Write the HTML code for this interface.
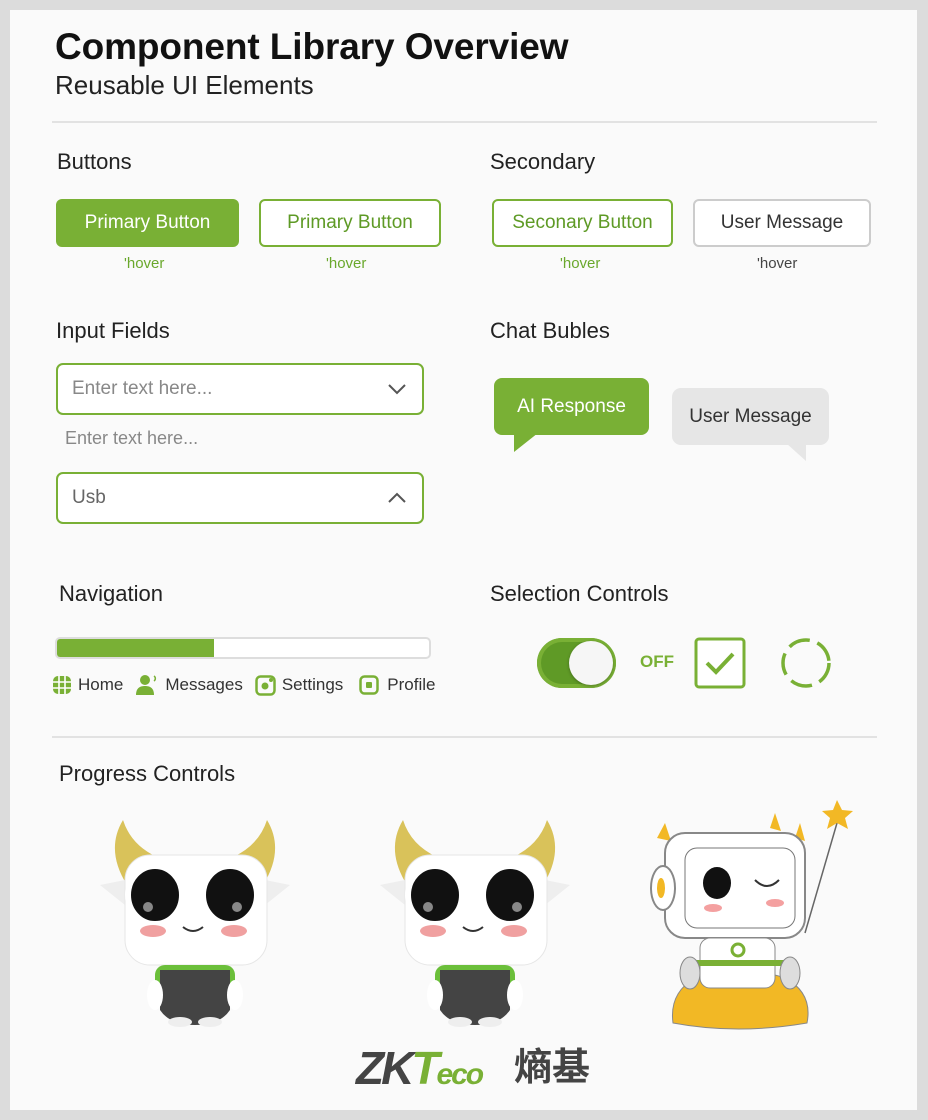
<!DOCTYPE html>
<html><head><meta charset="utf-8"><style>
*{margin:0;padding:0;box-sizing:border-box}
body{width:928px;height:1120px;background:#dcdcdc;font-family:"Liberation Sans","Noto Sans CJK SC",sans-serif;position:relative;overflow:hidden}
.card{position:absolute;left:10px;top:10px;width:907px;height:1100px;background:#fafafa}
.a{position:absolute}
h1{position:absolute;left:55px;top:26px;font-size:37px;font-weight:bold;color:#111;letter-spacing:-0.1px}
.sub{left:55px;top:70px;font-size:26px;color:#222}
.hr{height:2px;background:#e2e2e2;left:52px;width:825px}
.h{font-size:22px;color:#222}
.btn{position:absolute;height:48px;border-radius:6px;font-size:19px;display:flex;align-items:center;justify-content:center}
.g{background:#79b035;color:#fff}
.o{border:2px solid #79b035;color:#5e9a25;background:#fff}
.hv{font-size:15px;color:#6aa82c}
.inp{position:absolute;left:56px;width:368px;height:52px;border:2px solid #79b035;border-radius:7px;background:#fff;font-size:19px;color:#888;padding-left:14px;display:flex;align-items:center}
.nav{font-size:17px;color:#333}
</style></head><body>
<div class="card"></div>
<h1>Component Library Overview</h1>
<div class="a sub">Reusable UI Elements</div>
<div class="a hr" style="top:121px"></div>

<div class="a h" style="left:57px;top:149px">Buttons</div>
<div class="a h" style="left:490px;top:149px">Secondary</div>
<div class="btn g" style="left:56px;top:199px;width:183px">Primary Button</div>
<div class="btn o" style="left:259px;top:199px;width:182px">Primary Button</div>
<div class="btn o" style="left:492px;top:199px;width:181px">Seconary Button</div>
<div class="btn" style="left:693px;top:199px;width:178px;border:2px solid #ccc;background:#fff;color:#333">User Message</div>
<div class="a hv" style="left:124px;top:255px">'hover</div>
<div class="a hv" style="left:326px;top:255px">'hover</div>
<div class="a hv" style="left:560px;top:255px">'hover</div>
<div class="a hv" style="left:757px;top:255px;color:#444">'hover</div>

<div class="a h" style="left:56px;top:318px">Input Fields</div>
<div class="a h" style="left:490px;top:318px">Chat Bubles</div>
<div class="inp" style="top:363px">Enter text here...<svg class="a" style="right:16px;top:18px" width="18" height="12"><path d="M1 2l8 8 8-8" stroke="#555" stroke-width="2" fill="none"/></svg></div>
<div class="a" style="left:65px;top:428px;font-size:18px;color:#888">Enter text here...</div>
<div class="inp" style="top:472px;color:#666">Usb<svg class="a" style="right:16px;top:18px" width="18" height="12"><path d="M1 10l8-8 8 8" stroke="#555" stroke-width="2" fill="none"/></svg></div>

<div class="a" style="left:494px;top:378px;width:155px;height:57px;background:#79b035;border-radius:8px;color:#fff;font-size:19px;display:flex;align-items:center;justify-content:center">AI Response</div>
<svg class="a" style="left:512px;top:433px" width="30" height="20"><path d="M2 0v19L26 0z" fill="#79b035"/></svg>
<div class="a" style="left:672px;top:388px;width:157px;height:57px;background:#e6e6e6;border-radius:9px;color:#333;font-size:19px;display:flex;align-items:center;justify-content:center">User Message</div>
<svg class="a" style="left:786px;top:443px" width="22" height="20"><path d="M0 0h20v18z" fill="#e6e6e6"/></svg>

<div class="a h" style="left:59px;top:581px">Navigation</div>
<div class="a h" style="left:490px;top:581px">Selection Controls</div>
<div class="a" style="left:55px;top:637px;width:376px;height:22px;border:2px solid #ddd;border-radius:5px;background:#fff;overflow:hidden"><div style="width:157px;height:100%;background:#79b035"></div></div>
<div class="a nav" style="left:52px;top:674px;display:flex;align-items:center">
<svg width="20" height="20"><rect x="1" y="1" width="18" height="18" rx="5" fill="#79b035"/><path d="M7 1v18M13 1v18M1 7h18M1 13h18" stroke="#fff" stroke-width="1.6"/></svg><span style="margin-left:6px">Home</span>
<svg style="margin-left:12px" width="24" height="22"><circle cx="10" cy="6" r="5" fill="#79b035"/><path d="M1 21c0-7 4-9 9-9s9 2 9 9z" fill="#79b035"/><path d="M19 2a3 3 0 010 5" stroke="#79b035" fill="none" stroke-width="1.5"/></svg><span style="margin-left:6px">Messages</span>
<svg style="margin-left:12px" width="21" height="21"><rect x="1.5" y="1.5" width="18" height="18" rx="4" fill="none" stroke="#79b035" stroke-width="2.5"/><circle cx="10" cy="11" r="3.5" fill="#79b035"/><circle cx="16" cy="5" r="2" fill="#79b035"/></svg><span style="margin-left:6px">Settings</span>
<svg style="margin-left:16px" width="20" height="20"><rect x="1.5" y="1.5" width="17" height="17" rx="4" fill="none" stroke="#79b035" stroke-width="2.5"/><rect x="7" y="7" width="6" height="6" rx="1" fill="#79b035"/></svg><span style="margin-left:8px">Profile</span>
</div>

<div class="a" style="left:537px;top:638px;width:79px;height:50px;border-radius:25px;background:#5f9a26;box-shadow:inset 0 0 0 4px #79b035"></div>
<div class="a" style="left:569px;top:641px;width:44px;height:44px;border-radius:50%;background:#f6f6f6;box-shadow:0 1px 3px rgba(0,0,0,.3)"></div>
<div class="a" style="left:640px;top:652px;font-size:17px;color:#79b035;font-weight:bold">OFF</div>
<svg class="a" style="left:694px;top:637px" width="52" height="52"><rect x="2" y="2" width="48" height="48" rx="3" fill="#fff" stroke="#79b035" stroke-width="3"/><path d="M13 26l9 9 17-18" stroke="#79b035" stroke-width="4" fill="none"/></svg>
<svg class="a" style="left:779px;top:636px" width="54" height="54"><circle cx="27" cy="27" r="23" fill="none" stroke="#79b035" stroke-width="3.5" stroke-dasharray="22 8"/></svg>

<div class="a hr" style="top:736px"></div>
<div class="a h" style="left:59px;top:761px">Progress Controls</div>

<svg class="a" style="left:95px;top:815px" width="200" height="215" viewBox="0 0 200 215">
<path d="M32 70Q10 35 28 5Q36 30 62 42Z" fill="#d9c25a"/><path d="M168 70Q190 35 172 5Q164 30 138 42Z" fill="#d9c25a"/>
<path d="M5 70l25 20v-25z" fill="#eee"/><path d="M195 70l-25 20v-25z" fill="#eee"/>
<rect x="30" y="40" width="142" height="110" rx="25" fill="#fff" stroke="#e6e6e6"/>
<ellipse cx="60" cy="80" rx="27" ry="29" fill="#111" stroke="#fff" stroke-width="6"/><ellipse cx="135" cy="80" rx="27" ry="29" fill="#111" stroke="#fff" stroke-width="6"/>
<circle cx="53" cy="92" r="5" fill="#888"/><circle cx="142" cy="92" r="5" fill="#888"/>
<ellipse cx="58" cy="116" rx="13" ry="6" fill="#f0a0a0"/><ellipse cx="139" cy="116" rx="13" ry="6" fill="#f0a0a0"/>
<path d="M88 112q10 8 20 0" stroke="#333" fill="none" stroke-width="2"/>
<rect x="60" y="150" width="80" height="35" rx="10" fill="#6bbf3a"/>
<path d="M65 155h70v40q-10 15-35 15t-35-15z" fill="#444"/>
<ellipse cx="60" cy="180" rx="8" ry="15" fill="#fff"/><ellipse cx="140" cy="180" rx="8" ry="15" fill="#fff"/>
<ellipse cx="85" cy="207" rx="12" ry="5" fill="#eee"/><ellipse cx="115" cy="207" rx="12" ry="5" fill="#eee"/>
</svg>
<svg class="a" style="left:375px;top:815px" width="200" height="215" viewBox="0 0 200 215">
<path d="M32 70Q10 35 28 5Q36 30 62 42Z" fill="#d9c25a"/><path d="M168 70Q190 35 172 5Q164 30 138 42Z" fill="#d9c25a"/>
<path d="M5 70l25 20v-25z" fill="#eee"/><path d="M195 70l-25 20v-25z" fill="#eee"/>
<rect x="30" y="40" width="142" height="110" rx="25" fill="#fff" stroke="#e6e6e6"/>
<ellipse cx="60" cy="80" rx="27" ry="29" fill="#111" stroke="#fff" stroke-width="6"/><ellipse cx="135" cy="80" rx="27" ry="29" fill="#111" stroke="#fff" stroke-width="6"/>
<circle cx="53" cy="92" r="5" fill="#888"/><circle cx="142" cy="92" r="5" fill="#888"/>
<ellipse cx="58" cy="116" rx="13" ry="6" fill="#f0a0a0"/><ellipse cx="139" cy="116" rx="13" ry="6" fill="#f0a0a0"/>
<path d="M88 112q10 8 20 0" stroke="#333" fill="none" stroke-width="2"/>
<rect x="60" y="150" width="80" height="35" rx="10" fill="#6bbf3a"/>
<path d="M65 155h70v40q-10 15-35 15t-35-15z" fill="#444"/>
<ellipse cx="60" cy="180" rx="8" ry="15" fill="#fff"/><ellipse cx="140" cy="180" rx="8" ry="15" fill="#fff"/>
<ellipse cx="85" cy="207" rx="12" ry="5" fill="#eee"/><ellipse cx="115" cy="207" rx="12" ry="5" fill="#eee"/>
</svg>
<svg class="a" style="left:645px;top:798px" width="210" height="240" viewBox="0 0 210 240">
<path d="M28 225q-4-30 22-45q45-15 90 0q28 15 22 45q-70 12-134 0z" fill="#f2b825" stroke="#888"/>
<path d="M12 40l8-15 6 18z" fill="#f2b825"/><path d="M125 30l5-15 6 18z" fill="#f2b825"/><path d="M150 40l5-15 5 18z" fill="#f2b825"/>
<rect x="20" y="35" width="140" height="105" rx="20" fill="#fff" stroke="#888" stroke-width="2"/>
<rect x="40" y="50" width="110" height="80" rx="12" fill="#fff" stroke="#777"/>
<ellipse cx="18" cy="90" rx="12" ry="22" fill="#fff" stroke="#888" stroke-width="2"/><ellipse cx="16" cy="90" rx="4" ry="10" fill="#f2b825"/>
<ellipse cx="72" cy="85" rx="14" ry="16" fill="#111"/><path d="M110 82q12 12 24 0" stroke="#333" fill="none" stroke-width="2"/>
<ellipse cx="68" cy="110" rx="9" ry="4" fill="#f4a0a0"/><ellipse cx="130" cy="105" rx="9" ry="4" fill="#f4a0a0"/>
<rect x="55" y="140" width="75" height="50" rx="10" fill="#fff" stroke="#888"/>
<path d="M50 165h90" stroke="#7ab035" stroke-width="6"/><circle cx="93" cy="152" r="6" fill="none" stroke="#7ab035" stroke-width="3"/>
<ellipse cx="45" cy="175" rx="10" ry="16" fill="#ddd" stroke="#888"/><ellipse cx="145" cy="175" rx="10" ry="16" fill="#ddd" stroke="#888"/>
<path d="M160 135L192 25" stroke="#666" stroke-width="1.5"/>
<path d="M192 2l5 10 11 1-8 7 3 11-11-6-10 6 3-11-8-7 11-1z" fill="#f2b825"/>
</svg>

<div class="a" style="left:356px;top:1043px;font-size:46px;font-weight:bold;font-style:italic;letter-spacing:-3px;color:#444;line-height:50px">ZK<span style="color:#79b035">T</span><span style="color:#79b035;font-size:30px;letter-spacing:-2px">eco</span></div>
<div class="a" style="left:514px;top:1046px;font-size:38px;font-weight:bold;color:#444;line-height:44px">熵基</div>
</body></html>
